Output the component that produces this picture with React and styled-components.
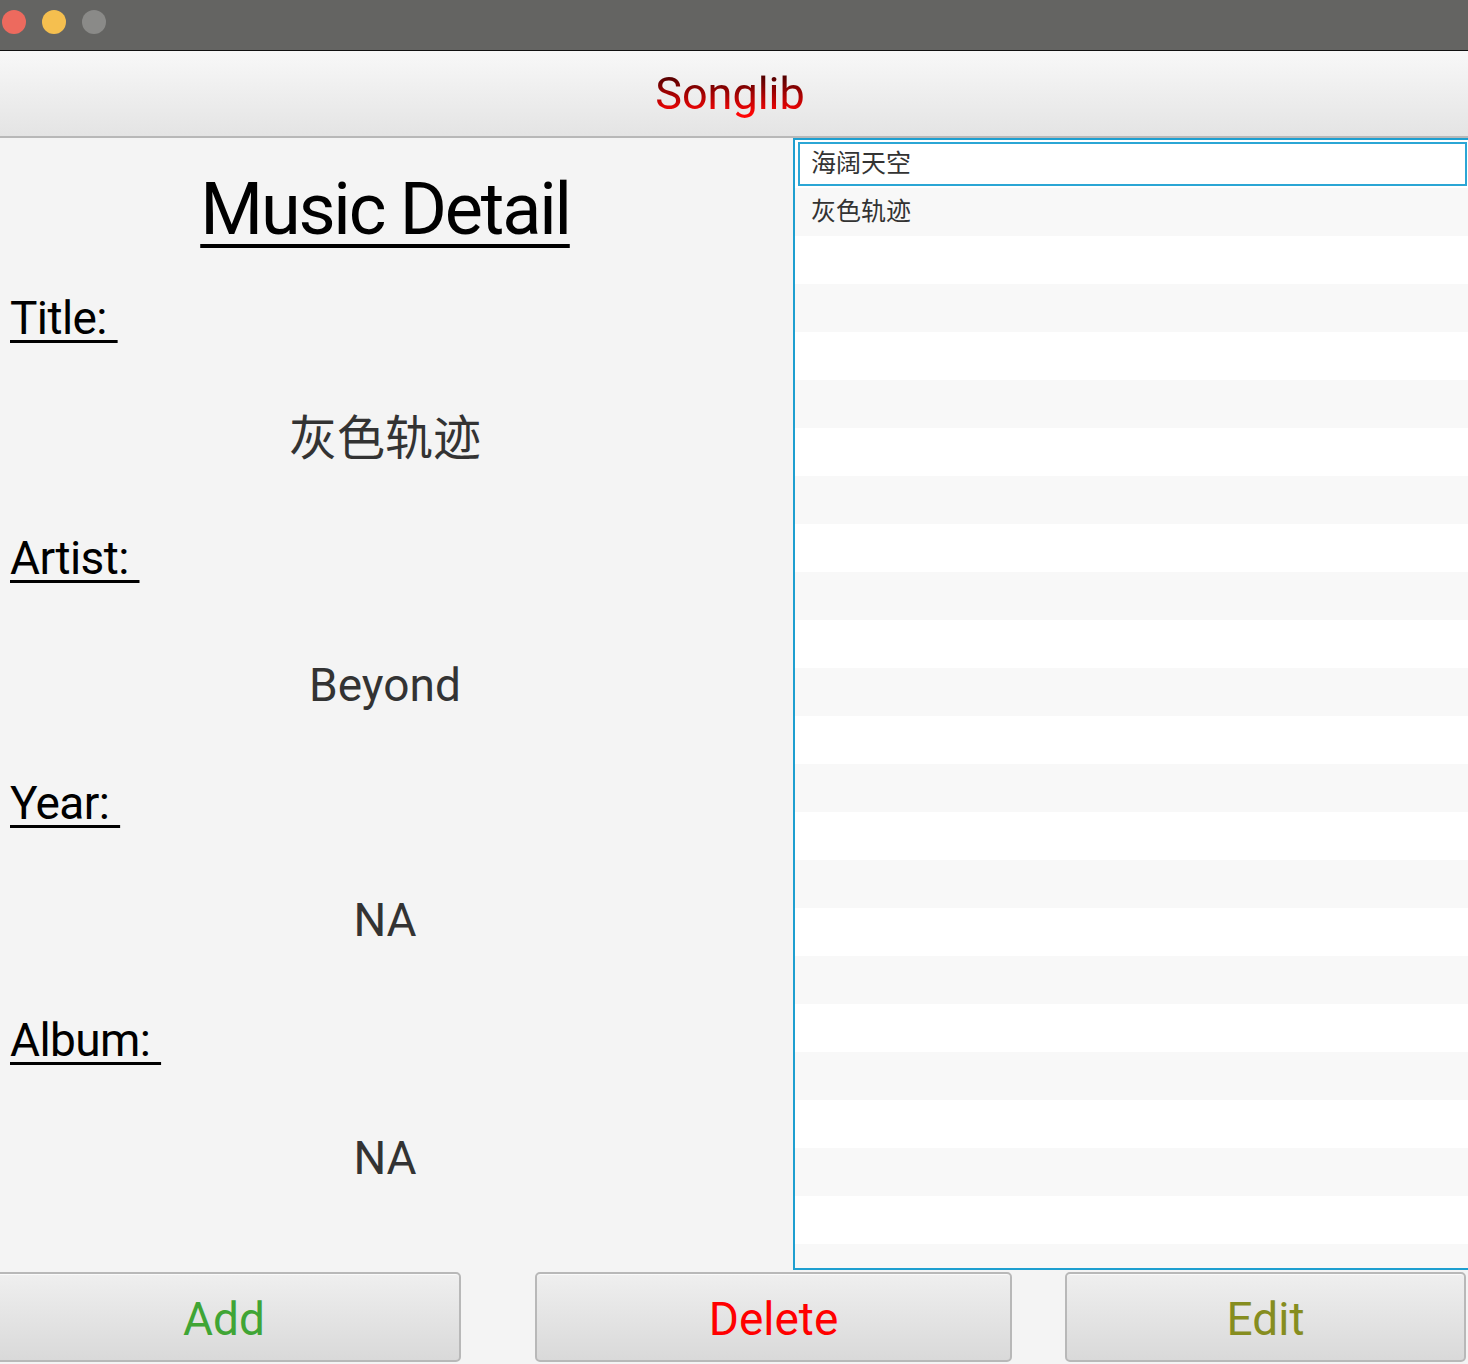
import styled, { createGlobalStyle } from "styled-components";

const GlobalStyle = createGlobalStyle`
  html, body {
    margin: 0;
    padding: 0;
    background: #f4f4f4;
  }
  body {
    font-family: Roboto, "Noto Sans CJK SC", sans-serif;
  }
`;

const songs = ["海阔天空", "灰色轨迹"];

// shift / nudge: small vertical shifts of the label and value text (px, + is down)
const fields = [
  { label: "Title: ", value: "灰色轨迹", size: 48, shift: 0, nudge: -4 },
  { label: "Artist: ", value: "Beyond", size: 46, shift: 0, nudge: 7 },
  { label: "Year: ", value: "NA", size: 46, shift: 5, nudge: 2 },
  { label: "Album: ", value: "NA", size: 46, shift: 2, nudge: 0 },
];

const buttons = [
  { text: "Add", color: "#40a535", width: 474, gap: -13 },
  { text: "Delete", color: "#ff0000", width: 477, gap: 74 },
  { text: "Edit", color: "#868d1f", width: 401, gap: 53 },
];

export default function App() {
  return (
    <Window>
      <GlobalStyle />
      <TitleBar>
        <Light color="#ed6a5e" />
        <Light color="#f5bf4f" />
        <Light color="#8a8a88" />
      </TitleBar>
      <Header>
        <AppName>Songlib</AppName>
      </Header>
      <Main>
        <Detail>
          <Heading>Music Detail</Heading>
          {fields.map((f) => (
            <Field key={f.label}>
              <LabelRow $nudge={f.shift}>
                <Label>{f.label}</Label>
              </LabelRow>
              <ValueRow $size={f.size} $nudge={f.nudge}>
                {f.value}
              </ValueRow>
            </Field>
          ))}
        </Detail>
        <SongList>
          {Array.from({ length: 24 }).map((_, i) => (
            <Row key={i} $odd={i % 2 === 1} $selected={i === 0}>
              {songs[i] || ""}
            </Row>
          ))}
        </SongList>
      </Main>
      <ButtonBar>
        {buttons.map((b) => (
          <Button key={b.text} $color={b.color} $width={b.width} $gap={b.gap}>
            {b.text}
          </Button>
        ))}
      </ButtonBar>
    </Window>
  );
}

const Window = styled.div`
  width: 1468px;
  height: 1364px;
  display: flex;
  flex-direction: column;
  overflow: hidden;
  background: #f4f4f4;
`;

const TitleBar = styled.div`
  height: 51px;
  flex: none;
  box-sizing: border-box;
  background: #646462;
  border-bottom: 1px solid #111;
  display: flex;
  align-items: center;
  gap: 16px;
  padding-left: 2px;
  padding-bottom: 6px;
`;

const Light = styled.span`
  width: 24px;
  height: 24px;
  border-radius: 50%;
  background: ${(p) => p.color};
`;

const Header = styled.div`
  height: 87px;
  flex: none;
  box-sizing: border-box;
  border-bottom: 2px solid #b8b8b8;
  background: linear-gradient(#f8f8f8, #e4e4e4);
  display: flex;
  align-items: center;
  justify-content: center;
  padding-right: 8px;
`;

const AppName = styled.div`
  font-size: 45px;
  line-height: 56px;
  background: linear-gradient(#560000 20%, #ff0505 85%);
  -webkit-background-clip: text;
  background-clip: text;
  color: transparent;
`;

const Main = styled.div`
  height: 1132px;
  flex: none;
  display: flex;
`;

const Detail = styled.div`
  width: 793px;
  flex: none;
  box-sizing: border-box;
  padding-right: 23px;
  display: flex;
  flex-direction: column;
  background: #f4f4f4;
`;

const Heading = styled.div`
  height: 120px;
  display: flex;
  align-items: center;
  justify-content: center;
  padding-top: 22px;
  box-sizing: border-box;
  font-size: 72px;
  letter-spacing: -2.2px;
  color: #000;
  text-decoration: underline;
  text-decoration-thickness: 4px;
  text-underline-offset: 10px;
`;

const Field = styled.div`
  display: flex;
  flex-direction: column;
`;

const LabelRow = styled.div`
  height: 120px;
  box-sizing: border-box;
  display: flex;
  align-items: center;
  padding-left: 10px;
  padding-top: ${(p) => p.$nudge * 2}px;
`;

const Label = styled.span`
  white-space: pre;
  font-size: 46px;
  letter-spacing: -0.6px;
  color: #000;
  text-decoration: underline;
  text-decoration-thickness: 3px;
  text-underline-offset: 6px;
`;

const ValueRow = styled.div`
  height: 120px;
  box-sizing: border-box;
  display: flex;
  align-items: center;
  justify-content: center;
  font-size: ${(p) => p.$size}px;
  color: #333;
  padding-top: ${(p) => Math.max(0, p.$nudge * 2)}px;
  padding-bottom: ${(p) => Math.max(0, -p.$nudge * 2)}px;
`;

const SongList = styled.div`
  flex: 1;
  box-sizing: border-box;
  border: 2px solid #1e9fd0;
  border-right: none;
  background: #fff;
  overflow: hidden;
`;

const Row = styled.div`
  box-sizing: border-box;
  display: flex;
  align-items: center;
  padding-bottom: 6px;
  font-size: 25px;
  color: #333;
  background: ${(p) => (p.$odd ? "#f8f8f8" : "#fff")};
  border: ${(p) => (p.$selected ? "2px solid #2ba6d5" : "none")};
  margin: ${(p) => (p.$selected ? "2px 1px 2px 3px" : "0")};
  height: ${(p) => (p.$selected ? "44px" : "48px")};
  padding-left: ${(p) => (p.$selected ? "11px" : "16px")};
`;

const ButtonBar = styled.div`
  flex: 1;
  display: flex;
  align-items: flex-start;
  padding-top: 2px;
`;

const Button = styled.button`
  width: ${(p) => p.$width}px;
  margin-left: ${(p) => p.$gap}px;
  height: 90px;
  flex: none;
  box-sizing: border-box;
  border: 2px solid #b8b8b8;
  border-radius: 5px;
  box-shadow: inset 0 1px 0 #fafafa;
  background: linear-gradient(#efefef, #d9d9d9);
  font-family: Roboto, sans-serif;
  font-size: 46px;
  color: ${(p) => p.$color};
  padding: 4px 0 0;
`;
